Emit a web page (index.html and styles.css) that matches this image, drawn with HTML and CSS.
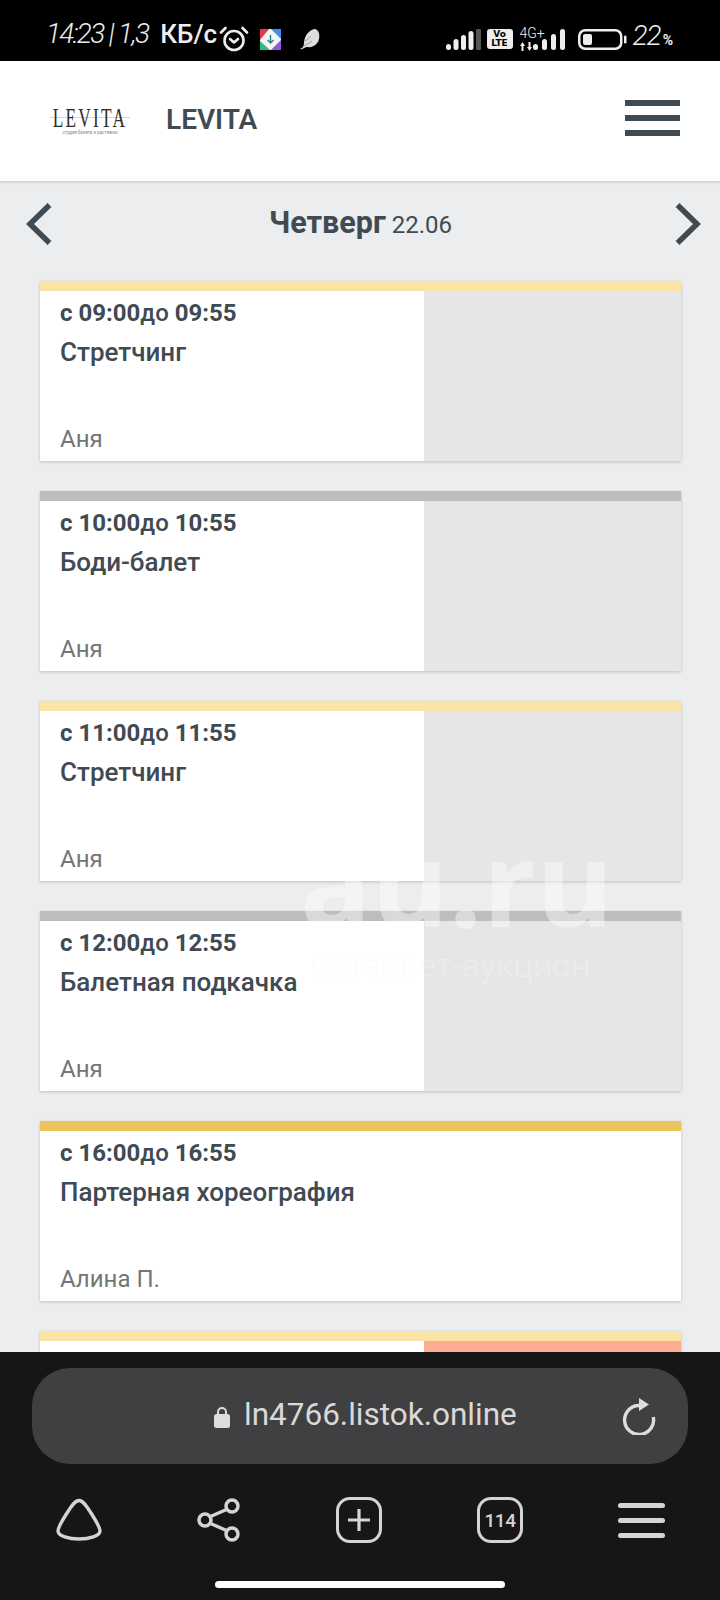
FILE: index.html
```html
<!DOCTYPE html>
<html lang="ru">
<head>
    <meta charset="UTF-8">
    <meta name="viewport" content="width=device-width, initial-scale=1.0">
    <title>LEVITA</title>
    <link rel="stylesheet" href="styles.css">
</head>
<body>
    <div class="status-bar">
        <div class="status-left">
            <span class="status-time">14:23 | 1,3</span>
            <span class="status-speed">КБ/с</span>
            <svg class="alarm-icon" width="30" height="26" viewBox="0 0 30 26" fill="none" stroke="#eee" stroke-width="2.600" stroke-linecap="round" stroke-linejoin="round">
                <circle cx="15" cy="14.500" r="9.500"/>
                <path d="M11 13l4 3.500 4-3.500"/>
                <path d="M2 6.500L6.500 2M28 6.500L23.500 2"/>
            </svg>
            <svg class="app-icon" width="21" height="21" viewBox="0 0 21 21">
                <rect width="21" height="21" fill="#f4f4f4"/>
                <path d="M0 0h9L0 11z" fill="#e8364f"/>
                <path d="M21 0v10L11 0z" fill="#3f8ee8"/>
                <path d="M21 21H11l10-10z" fill="#8e5ad6"/>
                <path d="M0 21V12l10 9z" fill="#25c07e"/>
                <path d="M10.500 6v8M7.500 11l3 3 3-3" fill="none" stroke="#2a8a8a" stroke-width="1.500"/>
            </svg>
            <svg class="feather-icon" width="22" height="22" viewBox="0 0 22 22">
                <path d="M1 21C4 20 5 18 5 14 6 6 12 1 16 1c4 1 5 6 4 10-1 5-6 9-12 8-2 0-4 3-7 2z" fill="#dedede"/>
                <path d="M5 18C8 16 11 15 13 13M6 13c2-1 4-3 6-5" fill="none" stroke="#999" stroke-width="1"/>
            </svg>
        </div>
        <div class="status-right">
            <svg class="signal-first" width="35" height="21" viewBox="0 0 35 21">
                <rect x="0" y="15" width="5" height="6" rx="2.500" fill="#eee"/>
                <rect x="7.500" y="10" width="5" height="11" rx="2.500" fill="#eee"/>
                <rect x="15" y="6" width="5" height="15" rx="2.500" fill="#eee"/>
                <rect x="22.500" y="2" width="5" height="19" rx="2.500" fill="#eee"/>
                <rect x="30" y="0" width="5" height="21" rx="1" fill="#555"/>
            </svg>
            <span class="volte">Vo<br>LTE</span>
            <div class="net-label">
                <span class="net-type">4G+</span>
                <svg class="net-arrows" width="13" height="9" viewBox="0 0 13 9" fill="#eee">
                    <path d="M0 4l2.500-4L5 4H3.500v5h-2V4zM7 5l2.500 4L12 5h-1.500V0h-2v5z"/>
                </svg>
            </div>
            <svg class="signal-second" width="33" height="21" viewBox="0 0 33 21">
                <rect x="0" y="15" width="5" height="6" rx="2.500" fill="#eee"/>
                <rect x="9" y="10" width="5" height="11" rx="2.500" fill="#eee"/>
                <rect x="18" y="5" width="5" height="16" rx="2.500" fill="#eee"/>
                <rect x="27" y="0" width="5" height="21" rx="2.500" fill="#eee"/>
            </svg>
            <svg class="battery-icon" width="49" height="21" viewBox="0 0 49 21">
                <rect x="1.250" y="1.250" width="42" height="18.500" rx="6" fill="none" stroke="#eee" stroke-width="2.500"/>
                <rect x="5" y="5" width="9" height="11" rx="2" fill="#eee"/>
                <rect x="46" y="6.500" width="2.500" height="8" rx="1.200" fill="#eee"/>
            </svg>
            <span class="status-battery">22<small>%</small></span>
        </div>
    </div>

    <header class="site-header">
        <div class="logo">
            <div class="logo-mark">LEVITA</div>
            <div class="logo-sub">студия балета и растяжки</div>
        </div>
        <div class="site-name">LEVITA</div>
        <div class="burger"><span></span><span></span><span></span></div>
    </header>

    <main class="schedule">
        <div class="day-nav">
            <svg width="26" height="42" viewBox="0 0 26 42" fill="none" stroke="#3f4a52" stroke-width="5.500">
                <path d="M23.500 2L4 21l19.500 19"/>
            </svg>
            <div class="day-title"><b>Четверг</b> 22.06</div>
            <svg width="26" height="42" viewBox="0 0 26 42" fill="none" stroke="#3f4a52" stroke-width="5.500">
                <path d="M2.500 2L22 21 2.500 40"/>
            </svg>
        </div>

        <div class="lesson lesson-yellow">
            <div class="lesson-info">
                <div class="lesson-time">с 09:00<span>до</span> 09:55</div>
                <div class="lesson-name">Стретчинг</div>
                <div class="lesson-coach">Аня</div>
            </div>
            <div class="lesson-side"></div>
        </div>

        <div class="lesson lesson-grey">
            <div class="lesson-info">
                <div class="lesson-time">с 10:00<span>до</span> 10:55</div>
                <div class="lesson-name">Боди-балет</div>
                <div class="lesson-coach">Аня</div>
            </div>
            <div class="lesson-side"></div>
        </div>

        <div class="lesson lesson-yellow">
            <div class="lesson-info">
                <div class="lesson-time">с 11:00<span>до</span> 11:55</div>
                <div class="lesson-name">Стретчинг</div>
                <div class="lesson-coach">Аня</div>
            </div>
            <div class="lesson-side"></div>
        </div>

        <div class="lesson lesson-grey">
            <div class="lesson-info">
                <div class="lesson-time">с 12:00<span>до</span> 12:55</div>
                <div class="lesson-name">Балетная подкачка</div>
                <div class="lesson-coach">Аня</div>
            </div>
            <div class="lesson-side"></div>
        </div>

        <div class="lesson lesson-gold">
            <div class="lesson-info">
                <div class="lesson-time">с 16:00<span>до</span> 16:55</div>
                <div class="lesson-name">Партерная хореография</div>
                <div class="lesson-coach">Алина П.</div>
            </div>
            <div class="lesson-side lesson-side-free"></div>
        </div>

        <div class="lesson lesson-yellow">
            <div class="lesson-info"></div>
            <div class="lesson-side lesson-side-full"></div>
        </div>

        <div class="watermark">
            <div class="watermark-logo">au.ru</div>
            <div class="watermark-sub">интернет-аукцион</div>
        </div>
    </main>

    <div class="browser-bar">
        <div class="url-bar">
            <svg class="lock-icon" width="16" height="22" viewBox="0 0 16 22">
                <path d="M4 9V6a4 4 0 0 1 8 0v3" fill="none" stroke="#ddd" stroke-width="2"/>
                <rect x="0" y="8" width="16" height="14" rx="2.500" fill="#ddd"/>
            </svg>
            <span class="url-text">ln4766.listok.online</span>
            <svg class="reload-icon" width="34" height="37" viewBox="0 0 34 37" fill="none" stroke="#ddd" stroke-width="3.400">
                <path d="M17 7.500A14.500 14.500 0 1 0 31.300 19"/>
                <path d="M17 0l10 6.500L17 13z" fill="#ddd" stroke="none"/>
            </svg>
        </div>
        <div class="browser-icons">
            <svg width="46" height="44" viewBox="0 0 46 44" fill="none" stroke="#d4d4d4" stroke-width="3.400">
                <path d="M23 2.500C27 2.500 30 7 35 15 40 23 44 29 44 33 44 38 33 41 23 41 13 41 2 38 2 33 2 29 6 23 11 15 16 7 19 2.500 23 2.500z"/>
            </svg>
            <svg width="44" height="46" viewBox="0 0 44 46" fill="none" stroke="#d4d4d4" stroke-width="3.500">
                <circle cx="35" cy="9" r="6"/>
                <circle cx="8" cy="23" r="6"/>
                <circle cx="35" cy="37" r="6"/>
                <path d="M13.500 19.500L29.500 12.500M13.500 26.500L29.500 33.500"/>
            </svg>
            <div class="icon-box"><svg width="22" height="22" viewBox="0 0 22 22" stroke="#d4d4d4" stroke-width="3.200"><path d="M11 0v22M0 11h22"/></svg></div>
            <div class="icon-box">114</div>
            <div class="browser-menu"><span></span><span></span><span></span></div>
        </div>
        <div class="home-indicator"></div>
    </div>
</body>
</html>
```

FILE: styles.css
```css
* {
    margin: 0;
    padding: 0;
    box-sizing: border-box;
}

body {
    font-family: 'Roboto', sans-serif;
    background-color: #ebedef;
    color: #3f4a52;
    height: 1600px;
    display: flex;
    flex-direction: column;
    overflow: hidden;
}

/* phone status bar */
.status-bar {
    background-color: #000000;
    color: #eeeeee;
    height: 61px;
    flex-shrink: 0;
    display: flex;
    justify-content: space-between;
    align-items: flex-start;
    padding: 0 47px 0 46px;
}

.status-left,
.status-right {
    display: flex;
    align-items: center;
    height: 61px;
}

.status-left {
    padding-top: 6px;
}

.status-time {
    font-size: 28px;
    font-weight: 300;
    font-style: italic;
    letter-spacing: -1.700px;
    white-space: pre;
    margin-right: 12px;
}

.status-speed {
    font-size: 26px;
    font-weight: 500;
}

.alarm-icon {
    margin: 11px 0 0 2px;
}

.app-icon {
    margin: 11px 0 0 11px;
}

.feather-icon {
    margin: 11px 0 0 18px;
}

.status-right {
    padding-top: 17px;
}

.volte {
    background-color: #eeeeee;
    color: #000000;
    font-family: 'DejaVu Sans', sans-serif;
    font-size: 9px;
    font-weight: bold;
    line-height: 9px;
    text-align: center;
    width: 26px;
    height: 20px;
    border-radius: 3px;
    margin-left: 6px;
    padding-top: 1px;
}

.net-label {
    display: flex;
    flex-direction: column;
    align-items: flex-start;
    width: 13px;
    margin: -1px 0 0 7px;
}

.net-type {
    font-size: 14px;
    font-weight: 300;
    line-height: 12px;
    white-space: nowrap;
}

.net-arrows {
    margin-top: 3px;
}

.battery-icon {
    margin-left: 12px;
}

.status-battery {
    font-size: 28px;
    font-weight: 300;
    font-style: italic;
    letter-spacing: -1px;
    margin: -8px 0 0 6px;
    white-space: nowrap;
}

.status-battery small {
    font-size: 14px;
    font-style: normal;
    font-weight: 700;
    letter-spacing: 0;
    margin-left: 2px;
}

/* site header */
.site-header {
    background-color: #ffffff;
    height: 120px;
    flex-shrink: 0;
    display: flex;
    align-items: center;
    padding: 0 40px 0 50px;
    box-shadow: 0 1px 3px rgba(0, 0, 0, 0.18);
    position: relative;
    z-index: 1;
}

.logo {
    width: 80px;
    margin-right: 36px;
    text-align: center;
    background: linear-gradient(#e6d6a2, #e6d6a2) center 11px / 100% 1px no-repeat;
}

.logo-mark {
    display: flex;
    justify-content: center;
    font-family: 'Liberation Serif', serif;
    font-size: 27px;
    line-height: 24px;
    letter-spacing: 3.500px;
    color: #2e2e2a;
    white-space: nowrap;
    transform: scaleX(0.64);
}

.logo-sub {
    font-size: 4.500px;
    line-height: 6px;
    color: #888888;
    white-space: nowrap;
}

.site-name {
    font-size: 28px;
    font-weight: 600;
    flex: 1;
    margin-top: -3px;
}

.burger {
    width: 55px;
    display: flex;
    flex-direction: column;
    gap: 9px;
    margin-top: -7px;
}

.burger span {
    height: 6px;
    background-color: #3f4a52;
}

/* schedule */
.schedule {
    flex: 1;
    overflow: hidden;
    position: relative;
    padding: 0 19px 0 26px;
}

.day-nav {
    display: flex;
    justify-content: space-between;
    align-items: center;
    height: 100px;
    padding-bottom: 14px;
}

.day-title {
    font-size: 24px;
    margin: -4px 0 0 -6px;
}

.day-title b {
    font-size: 30.500px;
    font-weight: 700;
}

.lesson {
    display: flex;
    height: 180px;
    margin: 0 20px 30px 14px;
    border-top: 10px solid #fce3a6;
    box-shadow: 0 1px 3px rgba(0, 0, 0, 0.2);
}

.lesson-grey {
    border-top-color: #bdbdbd;
}

.lesson-gold {
    border-top-color: #eac55c;
}

.lesson-info {
    width: 384px;
    background-color: #ffffff;
    padding: 8px 20px 0 20px;
    display: flex;
    flex-direction: column;
}

.lesson-side {
    flex: 1;
    background-color: #e6e6e6;
}

.lesson-side-free {
    background-color: #ffffff;
}

.lesson-side-full {
    background-color: #ffab91;
}

.lesson-time {
    font-size: 24px;
    font-weight: 700;
    line-height: 28px;
}

.lesson-time span {
    font-weight: 500;
}

.lesson-name {
    font-size: 26px;
    font-weight: 500;
    line-height: 30px;
    margin-top: 10px;
}

.lesson-coach {
    font-size: 24px;
    color: #757575;
    line-height: 28px;
    margin-top: auto;
    margin-bottom: 8px;
}

/* photo site stamp laid over the screenshot */
.watermark {
    position: absolute;
    left: 300px;
    top: 642px;
    width: 300px;
    color: rgba(255, 255, 255, 0.42);
    text-align: center;
    pointer-events: none;
}

.watermark-logo {
    font-family: 'Open Sans', sans-serif;
    font-size: 118px;
    font-weight: 700;
    line-height: 118px;
}

.watermark-sub {
    font-size: 34px;
    font-weight: 300;
    line-height: 34px;
    margin-top: 7px;
    white-space: nowrap;
    color: rgba(255, 255, 255, 0.35);
    text-shadow: 0 0 1px rgba(0, 0, 0, 0.015);
}

/* browser bottom bar */
.browser-bar {
    background-color: #161616;
    height: 248px;
    flex-shrink: 0;
    position: relative;
    z-index: 1;
    padding: 16px 32px 0 32px;
}

.url-bar {
    background-color: #404042;
    height: 96px;
    border-radius: 38px;
    display: flex;
    align-items: center;
    padding: 0 32px 0 182px;
}

.url-text {
    font-size: 31.500px;
    color: #d9d9d9;
    margin: -4px 0 0 14px;
    flex: 1;
    white-space: nowrap;
}

.lock-icon {
    margin-top: 2px;
}

.browser-icons {
    display: flex;
    justify-content: space-between;
    align-items: center;
    height: 48px;
    margin-top: 32px;
    padding: 0 23px 0 24px;
}

.icon-box {
    width: 46px;
    height: 46px;
    border: 3.500px solid #d4d4d4;
    border-radius: 14px;
    color: #d4d4d4;
    font-size: 19px;
    font-weight: 500;
    letter-spacing: -0.500px;
    display: flex;
    align-items: center;
    justify-content: center;
}

.browser-menu {
    width: 47px;
    display: flex;
    flex-direction: column;
    gap: 10px;
}

.browser-menu span {
    height: 5px;
    border-radius: 3px;
    background-color: #d4d4d4;
}

.home-indicator {
    width: 290px;
    height: 7px;
    border-radius: 4px;
    background-color: #ffffff;
    margin: 37px auto 0 auto;
}
```
